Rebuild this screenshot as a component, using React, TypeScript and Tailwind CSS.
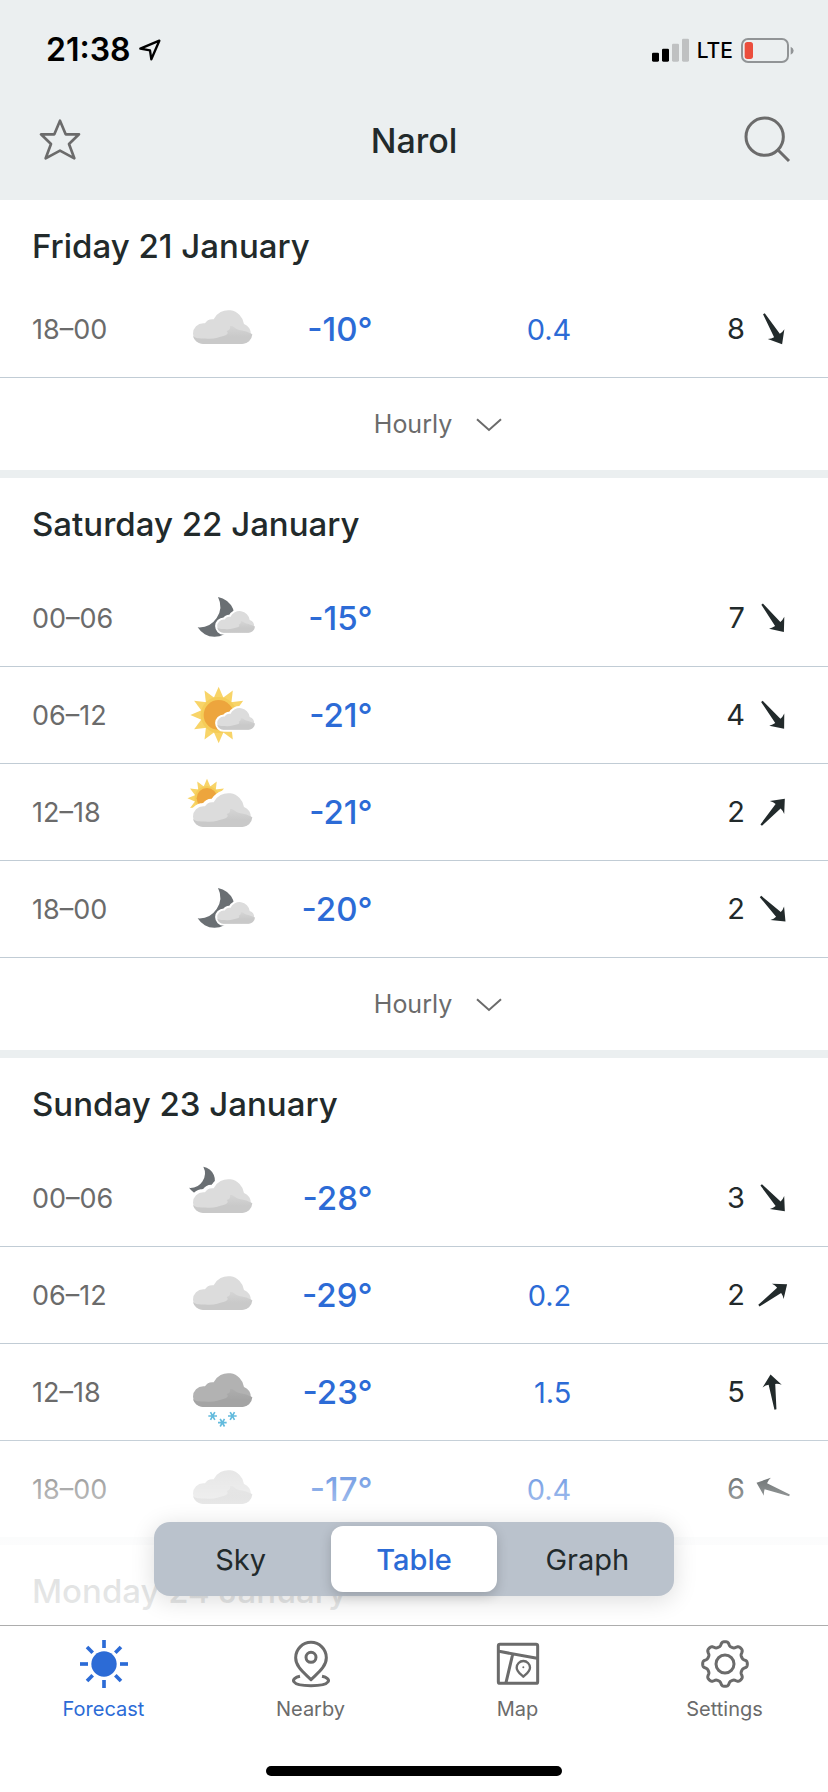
import React from "react";

type Sky = "cloud" | "moonSmallCloud" | "sunSmallCloud" | "sunBigCloud" | "moonBigCloud" | "snow";
type Row = { time: string; sky: Sky; temp: string; rain?: string; wind: number; dir: number };
type Day = { title: string; rows: Row[]; hourly?: boolean; compact?: boolean };

const days: Day[] = [
  {
    title: "Friday 21 January",
    compact: true,
    hourly: true,
    rows: [{ time: "18–00", sky: "cloud", temp: "-10°", rain: "0.4", wind: 8, dir: 149 }],
  },
  {
    title: "Saturday 22 January",
    hourly: true,
    rows: [
      { time: "00–06", sky: "moonSmallCloud", temp: "-15°", wind: 7, dir: 142 },
      { time: "06–12", sky: "sunSmallCloud", temp: "-21°", wind: 4, dir: 141 },
      { time: "12–18", sky: "sunBigCloud", temp: "-21°", wind: 2, dir: 42 },
      { time: "18–00", sky: "moonSmallCloud", temp: "-20°", wind: 2, dir: 135 },
    ],
  },
  {
    title: "Sunday 23 January",
    rows: [
      { time: "00–06", sky: "moonBigCloud", temp: "-28°", wind: 3, dir: 138 },
      { time: "06–12", sky: "cloud", temp: "-29°", rain: "0.2", wind: 2, dir: 53 },
      { time: "12–18", sky: "snow", temp: "-23°", rain: "1.5", wind: 5, dir: -8 },
      { time: "18–00", sky: "cloud", temp: "-17°", rain: "0.4", wind: 6, dir: 291 },
    ],
  },
  { title: "Monday 24 January", rows: [] },
];

const CLOUD =
  "M64 165A31 31 0 0 1 64 103Q66 102 69 103C74 94 84 89 95 91A48 48 0 0 1 186 105A31 31 0 0 1 180 165Z";
const CLOUD_SHADE =
  "M33 141C44 151 58 147 76 149C96 151 112 144 124 141C138 137 140 132 134 126C140 124 146 122 144 112C150 108 156 114 164 120C172 124 178 124 186 126C196 128 204 132 211 136A31 31 0 0 1 180 165H64A31 31 0 0 1 33 141Z";

function Cloud({ dark, transform }: { dark?: boolean; transform?: string }) {
  const id = React.useId();
  return (
    <g transform={transform}>
      <defs>
        <linearGradient id={id} x1="0" y1="0" x2="0" y2="1">
          <stop offset="0" stopColor={dark ? "#adadad" : "#d5d5d5"} />
          <stop offset="0.6" stopColor={dark ? "#a4a4a4" : "#c9c9c9"} />
        </linearGradient>
      </defs>
      <path d={CLOUD} fill="#fff" stroke="#fff" strokeWidth="20" />
      <path d={CLOUD} fill={dark ? "#b2b2b2" : "#dcdcdc"} />
      <path d={CLOUD_SHADE} fill={`url(#${id})`} />
    </g>
  );
}

const SMALL = "translate(84.6 58.9) scale(.637)";

function Moon({ transform }: { transform?: string }) {
  return (
    <path
      transform={transform}
      d="M108 57A60 60 0 1 1 47 148A63 63 0 0 0 108 57Z"
      fill="#6a6f73"
    />
  );
}

function Sun({ transform }: { transform?: string }) {
  const rays = Array.from({ length: 12 }, (_, i) => i * 30);
  return (
    <g transform={transform}>
      {rays.map((a) => (
        <path key={a} d="M-15 -50L0 -85L15 -50Z" fill="#f8d468" transform={`rotate(${a})`} />
      ))}
      <circle r="54" fill="#f5cc58" />
      <circle r="45" fill="#eda53d" />
    </g>
  );
}

function Flake({ x, y }: { x: number; y: number }) {
  return (
    <path
      transform={`translate(${x} ${y})`}
      d="M-13 0H13M-6.5 -11.5L6.5 11.5M6.5 -11.5L-6.5 11.5"
      stroke="#63bbdd"
      strokeWidth="5"
    />
  );
}

function SkyIcon({ sky }: { sky: Sky }) {
  return (
    <svg viewBox="0 0 240 240" className="block size-20" fill="none" aria-hidden="true">
      {sky === "moonSmallCloud" && <Moon />}
      {sky === "moonBigCloud" && <Moon transform="translate(-11.6 -14) scale(.7)" />}
      {sky === "sunSmallCloud" && <Sun transform="translate(110 120)" />}
      {sky === "sunBigCloud" && <Sun transform="translate(75 79) scale(.69)" />}
      {sky === "moonSmallCloud" || sky === "sunSmallCloud" ? (
        <Cloud transform={SMALL} />
      ) : (
        <Cloud dark={sky === "snow"} />
      )}
      {sky === "snow" && (
        <>
          <Flake x={92} y={192} />
          <Flake x={121} y={212} />
          <Flake x={151} y={192} />
        </>
      )}
    </svg>
  );
}

function WindArrow({ dir }: { dir: number }) {
  return (
    <svg viewBox="0 0 120 120" className="size-10" aria-hidden="true">
      <path
        transform={`rotate(${dir} 60 60)`}
        d="M60 7L89 42Q79 37 70 37L63 113H57L50 37Q41 37 31 42Z"
        fill="#222a2b"
      />
    </svg>
  );
}

function DaySection({ day }: { day: Day }) {
  return (
    <section className="border-b-8 border-[#ebeff0] last:border-b-0">
      <h2
        className={
          "flex items-start px-8 pt-[26px] text-[33px] leading-10 font-medium " +
          (day.compact ? "h-[81px]" : "h-[92px]")
        }
      >
        {day.title}
      </h2>
      {day.rows.length > 0 && (
        <table className="w-full table-fixed border-separate border-spacing-0" aria-label={day.title}>
          <colgroup>
            <col className="w-[22%]" />
            <col className="w-[10%]" />
            <col className="w-[13%]" />
            <col className="w-[24%]" />
            <col className="w-[31%]" />
          </colgroup>
          <tbody>
            {day.rows.map((r, i) => {
              const line =
                day.hourly || i < day.rows.length - 1 ? "h-[97px] border-b border-[#c1ccd5] " : "h-24 ";
              return (
                <tr key={r.time}>
                  <th
                    scope="row"
                    className={line + "pt-0.5 pr-0 pb-0 pl-8 text-left text-[27px] font-normal text-[#6b6b6b]"}
                  >
                    {r.time}
                  </th>
                  <td className={line + "p-0"}>
                    <SkyIcon sky={r.sky} />
                  </td>
                  <td className={line + "px-0 pt-0.5 pb-0 text-right text-[33px] font-medium text-[#2c6bd6]"}>
                    {r.temp}
                  </td>
                  <td className={line + "px-0 pt-0.5 pb-0 text-right text-[29px] text-[#2c6bd6]"}>{r.rain}</td>
                  <td className={line + "p-0"}>
                    <div className="flex items-center justify-end gap-2 pr-[35px] text-[29px]">
                      {r.wind}
                      <WindArrow dir={r.dir} />
                    </div>
                  </td>
                </tr>
              );
            })}
          </tbody>
        </table>
      )}
      {day.hourly && (
        <button className="flex h-[92px] w-full items-center justify-center gap-6 pt-0.5 pl-12 text-[25px] text-[#6b6b6b]">
          Hourly
          <svg viewBox="0 0 78 42" className="h-[14px] w-[26px]" fill="none" stroke="currentColor" strokeWidth="6">
            <path d="M3 4L39 36L75 4" />
          </svg>
        </button>
      )}
    </section>
  );
}

function gearPath() {
  const pts: string[] = [];
  for (let i = 0; i < 240; i++) {
    const t = (i / 240) * Math.PI * 2;
    const r = 60.5 + 6.5 * (Math.tanh(1.6 * Math.cos(8 * t)) / Math.tanh(1.6));
    pts.push(`${(72 + r * Math.sin(t)).toFixed(1)} ${(72 - r * Math.cos(t)).toFixed(1)}`);
  }
  return `M${pts.join("L")}Z`;
}

const tabs = [
  {
    label: "Forecast",
    icon: (
      <>
        <circle cx="72" cy="72" r="38" fill="currentColor" stroke="none" />
        {[0, 45, 90, 135, 180, 225, 270, 315].map((a) => (
          <path key={a} d="M72 0V24" strokeWidth="11" transform={`rotate(${a} 72 72)`} />
        ))}
      </>
    ),
  },
  {
    label: "Nearby",
    icon: (
      <>
        <path d="M72 119C52 99 26 81 26 53A46 46 0 0 1 118 53C118 81 92 99 72 119Z" />
        <circle cx="72" cy="52" r="15" />
        <path d="M39 109C9 115 9 137 72 137S135 115 105 109" />
      </>
    ),
  },
  {
    label: "Map",
    icon: (
      <>
        <rect x="13" y="13" width="118" height="117" rx="5" />
        <path d="M15 34L129 55M56 43L36 128" />
        <path d="M88 110C80 102 68 95 68 83A20 20 0 0 1 108 83C108 95 96 102 88 110Z" strokeWidth="7" />
        <circle cx="88" cy="82" r="3" fill="currentColor" stroke="none" />
      </>
    ),
  },
  {
    label: "Settings",
    icon: (
      <>
        <circle cx="72" cy="72" r="27" />
        <path d={gearPath()} />
      </>
    ),
  },
];

export default function App() {
  return (
    <div className="flex h-screen flex-col bg-white font-['Inter',sans-serif] text-[#222a2b]">
      <header className="bg-[#ebeff0] pb-5">
        <div className="flex h-[100px] items-center justify-between pr-[34px] pl-[46px] text-black">
          <div className="flex items-center gap-2">
            <span className="text-[32px] font-semibold">21:38</span>
            <svg viewBox="0 0 66 66" className="size-[22px]" fill="none" stroke="currentColor" strokeWidth="7" strokeLinejoin="round">
              <path d="M4 29L61 5L37 61L33 34Z" />
            </svg>
          </div>
          <div className="flex items-center gap-2">
            <svg viewBox="0 0 111 72" className="h-6 w-[37px]" fill="currentColor" aria-hidden="true">
              <rect x="0" y="44" width="21" height="27" rx="4" />
              <rect x="30" y="32" width="21" height="39" rx="4" />
              <rect x="60" y="17" width="21" height="54" rx="4" fill="#bfc1c2" />
              <rect x="90" y="2" width="21" height="69" rx="4" fill="#bfc1c2" />
            </svg>
            <span className="pt-0.5 text-[21px] font-medium">LTE</span>
            <svg viewBox="0 0 159 75" className="h-[25px] w-[53px]" fill="none" aria-hidden="true">
              <rect x="3" y="3" width="138" height="69" rx="18" stroke="#919496" strokeWidth="6" />
              <rect x="11" y="12" width="25" height="51" rx="8" fill="#eb4e3d" />
              <path d="M149 26Q158 30 158 38T149 50Z" fill="#919496" />
            </svg>
          </div>
        </div>
        <div className="grid h-20 grid-cols-3 items-center px-[35px]">
          <button aria-label="Add to favourites" className="justify-self-start text-[#6b6b6b]">
            <svg viewBox="0 0 150 150" className="block size-[50px]" fill="none" stroke="currentColor" strokeWidth="8" strokeLinejoin="round">
              <path d="M75 17L92 58H132L102 87L118 130L75 107L32 130L48 87L18 58H58Z" />
            </svg>
          </button>
          <h1 className="text-center text-[34px] font-medium">Narol</h1>
          <button aria-label="Search" className="justify-self-end text-[#6b6b6b]">
            <svg viewBox="0 0 150 150" className="block size-[50px]" fill="none" stroke="currentColor" strokeWidth="9">
              <circle cx="65" cy="65" r="56" />
              <path d="M105 105L138 138" />
            </svg>
          </button>
        </div>
      </header>

      <div className="relative min-h-0 flex-1">
        <main className="h-full overflow-y-auto [scrollbar-width:none]">
          {days.map((d) => (
            <DaySection key={d.title} day={d} />
          ))}
        </main>
        <div className="pointer-events-none absolute inset-x-0 bottom-0 h-[195px] bg-[linear-gradient(to_bottom,rgba(255,255,255,0),rgba(255,255,255,.84)_57%,rgba(255,255,255,.9))]" />
        <div className="absolute inset-x-0 bottom-[29px] flex justify-center">
          <div className="grid h-[74px] w-[520px] grid-cols-3 rounded-2xl bg-[#bac2cc] py-1 text-[29px] shadow-[0_4px_24px_rgba(0,0,0,0.14)]">
            <button className="pt-0.5">Sky</button>
            <button
              aria-pressed="true"
              className="mx-1 rounded-xl bg-white pt-0.5 font-medium text-[#2c6bd6] shadow-[0_4px_12px_rgba(0,0,0,0.18)]"
            >
              Table
            </button>
            <button className="pt-0.5">Graph</button>
          </div>
        </div>
      </div>

      <footer className="border-t border-[#adadad]">
        <nav className="grid grid-cols-4 pt-[14px]">
          {tabs.map((t, i) => (
            <a
              key={t.label}
              href="#"
              className={"flex flex-col items-center gap-2 " + (i === 0 ? "text-[#2c6bd6]" : "text-[#6b6b6b]")}
            >
              <svg viewBox="0 0 144 144" className="size-12" fill="none" stroke="currentColor" strokeWidth="9" strokeLinejoin="round" aria-hidden="true">
                {t.icon}
              </svg>
              <span className="text-[20px] leading-[26px]">{t.label}</span>
            </a>
          ))}
        </nav>
        <div className="flex justify-center pt-11 pb-4">
          <div className="h-[10px] w-[296px] rounded-full bg-black" />
        </div>
      </footer>
    </div>
  );
}
